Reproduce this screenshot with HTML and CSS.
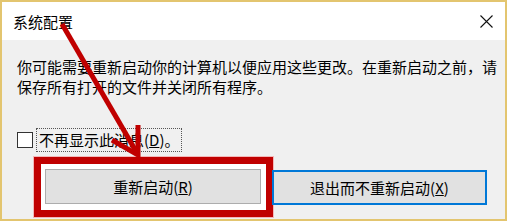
FILE: index.html
```html
<!DOCTYPE html>
<html lang="zh-CN">
<head>
<meta charset="UTF-8">
<title>系统配置</title>
<link rel="stylesheet" href="styles.css">
</head>
<body>
  <div class="dialog">
    <div class="titlebar">
      <span class="title">系统配置</span>
      <svg class="close" width="13" height="13" viewBox="0 0 13 13">
        <path d="M0.5 0.5 L12.5 12.5 M12.5 0.5 L0.5 12.5" stroke="#111" stroke-width="1.1" fill="none"/>
      </svg>
    </div>
    <div class="content">
      <p class="msg">你可能需要重新启动你的计算机以便应用这些更改。在重新启动之前，请保存所有打开的文件并关闭所有程序。</p>
      <div class="check">
        <span class="box"></span>
        <span class="focus">不再显示此消息(<u>D</u>)。</span>
      </div>
      <div class="buttons">
        <div class="mark">
          <button class="btn">重新启动(<u>R</u>)</button>
        </div>
        <button class="btn default">退出而不重新启动(<u>X</u>)</button>
      </div>
    </div>
    <!-- annotation arrow drawn over the dialog -->
    <svg class="arrow" width="509" height="222" viewBox="0 0 509 222">
      <g stroke="#c00000" stroke-width="5" fill="none">
        <line x1="62" y1="24" x2="137" y2="153"/>
        <polyline points="138,125 138,155 112,140" stroke-linejoin="miter"/>
      </g>
    </svg>
  </div>
</body>
</html>
```

FILE: styles.css
```css
body {
  margin: 0;
  background: #fff;
  font-family: "Noto Sans CJK SC", "Microsoft YaHei", sans-serif;
  font-size: 15px;
  color: #000;
}
.dialog {
  position: relative;
  box-sizing: border-box;
  width: 507px;
  height: 221px;
  border: 2px solid #e3c56f;
  display: flex;
  flex-direction: column;
}
.titlebar {
  height: 37px;
  background: #fff;
  display: flex;
  align-items: center;
  justify-content: space-between;
  padding: 1px 12px 0 11px;
}
.title {
  line-height: 20px;
}
.content {
  flex: 1;
  background: #f0f0f0;
  padding: 0 5px 0 15px;
}
.msg {
  margin: 17px 0 0 0;
  line-height: 20px;
}
.check {
  display: flex;
  align-items: center;
  margin-top: 31px;
  line-height: 20px;
}
.box {
  width: 14px;
  height: 14px;
  border: 1px solid #333;
  background: #fff;
  margin-right: 3px;
}
.focus {
  border: 1px dotted #555;
  padding: 1px 2px;
}
.buttons {
  display: flex;
  align-items: center;
  margin-top: 5px;
  padding-left: 17px;
}
.mark {
  border: 7px solid #c00000;
  background: #fff;
  padding: 5px 5px 6px 4px;
  box-shadow: 0 0 0 1px #f3b8b8;
}
.btn {
  font-family: inherit;
  font-size: 15px;
  color: #000;
  background: #e1e1e1;
  border: 1px solid #adadad;
  height: 35px;
  width: 216px;
  padding: 0;
  margin: 0;
}
.btn.default {
  border: 2px solid #0078d7;
  width: 215px;
  margin-left: -1px;
}
.arrow {
  position: absolute;
  left: -2px;
  top: -2px;
  pointer-events: none;
}
```
